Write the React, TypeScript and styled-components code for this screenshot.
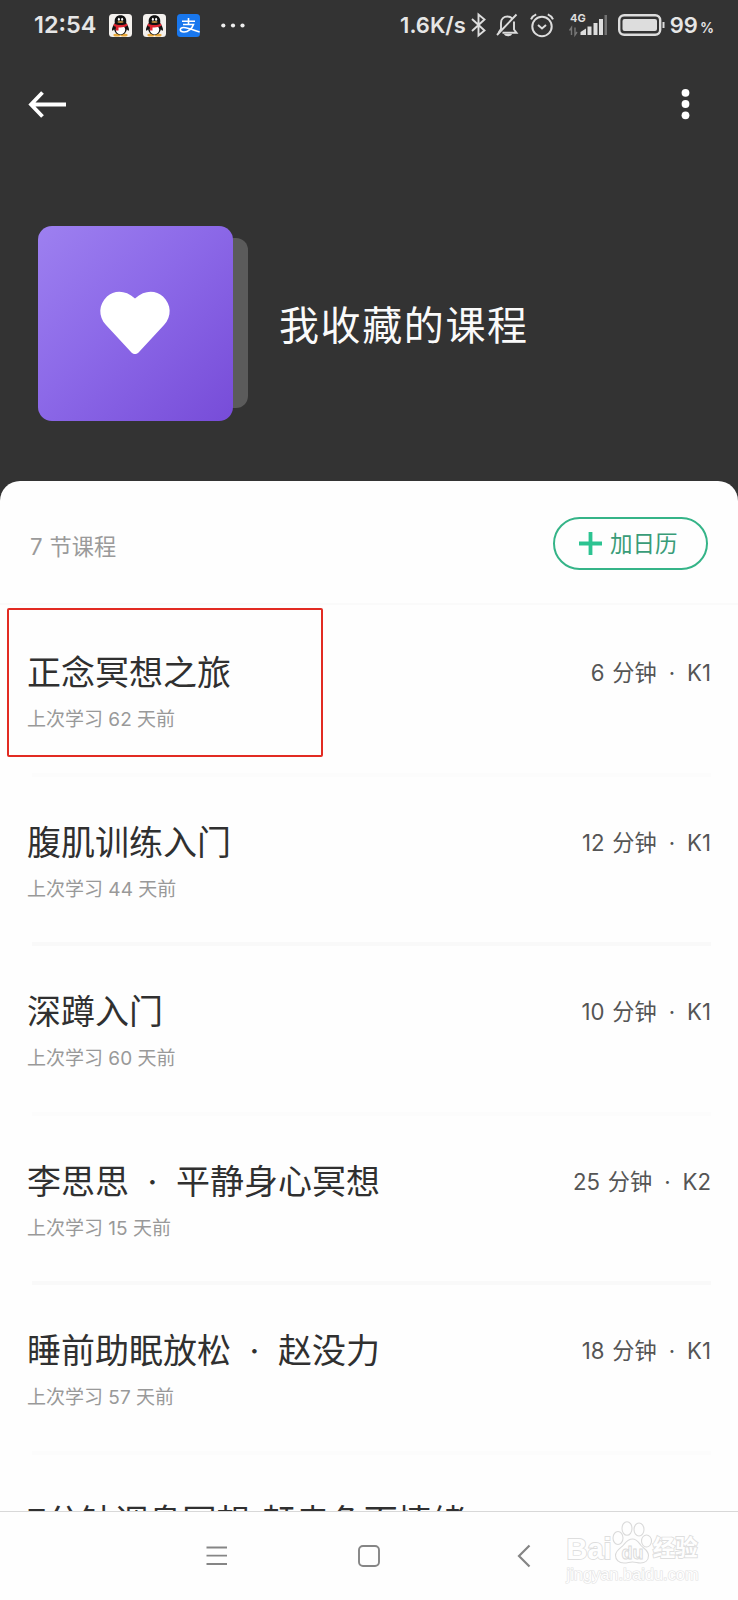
import React from 'react';
import styled, { createGlobalStyle } from 'styled-components';

const GlobalStyle = createGlobalStyle`
  * { box-sizing: border-box; }
  html, body { margin: 0; padding: 0; background: #333; }
  body { font-family: Inter, 'Noto Sans CJK SC', sans-serif; }
`;

const Screen = styled.div`
  width: 738px;
  height: 1600px;
  display: flex;
  flex-direction: column;
  overflow: hidden;
  background: #333333;
`;

const StatusBar = styled.header`
  height: 52px;
  flex: none;
  display: flex;
  align-items: center;
  justify-content: space-between;
  padding: 0 24px 2px 34px;
  color: #e6e6e6;
`;

const StatusGroup = styled.div`
  display: flex;
  align-items: center;
`;

const StatusText = styled.span<{ $size: number; $ml?: number; $drop?: number }>`
  margin-left: ${p => p.$ml ?? 0}px;
  margin-top: ${p => p.$drop ?? 0}px;
  font-size: ${p => p.$size}px;
  font-weight: 600;
  line-height: 28px;
  white-space: nowrap;
`;

const Glyph = styled.svg<{ $ml?: number }>`
  display: block;
  flex: none;
  overflow: visible;
  margin-left: ${p => p.$ml ?? 0}px;
`;

const Toolbar = styled.nav`
  height: 104px;
  flex: none;
  display: flex;
  align-items: center;
  justify-content: space-between;
  padding: 0 46px 0 28px;
`;

const IconButton = styled.button`
  border: 0;
  padding: 0;
  background: none;
  display: flex;
`;

const Hero = styled.section`
  height: 325px;
  flex: none;
  display: flex;
  align-items: flex-start;
  padding: 69.5px 0 0 37.5px;
`;

const CoverStack = styled.div`
  display: flex;
  align-items: center;
  width: 210.5px;
  height: 195.5px;
`;

const Cover = styled.div`
  width: 195.5px;
  height: 195.5px;
  flex: none;
  z-index: 1;
  border-radius: 14px;
  display: flex;
  align-items: center;
  justify-content: center;
  background: linear-gradient(135deg, #9d80f0 0%, #8c69e8 45%, #774cd8 100%);
`;

const CoverBack = styled.div`
  width: 35px;
  height: 170px;
  flex: none;
  margin-left: -20px;
  border-radius: 12px;
  background: #5b5b5b;
`;

const HeroTitle = styled.h1`
  margin: 76px 0 0 31px;
  font-size: 40px;
  font-weight: 400;
  line-height: 48px;
  letter-spacing: 1.6px;
  color: #fafafa;
`;

const Sheet = styled.main`
  height: 1030px;
  flex: none;
  overflow: hidden;
  background: #fefefe;
  border-radius: 20px 20px 0 0;
`;

const SheetHeader = styled.div`
  height: 124px;
  display: flex;
  align-items: flex-start;
  justify-content: space-between;
  padding: 36px 30px 0 30px;
  border-bottom: 2px solid #fafafa;
`;

const Count = styled.span`
  margin-top: 14px;
  font-size: 22.2px;
  line-height: 32px;
  word-spacing: 0.8px;
  color: #9a9a9a;
`;

const CalendarButton = styled.button`
  width: 155px;
  height: 53px;
  padding: 0 0 0 24px;
  display: flex;
  align-items: center;
  gap: 8px;
  border: 2px solid #35b488;
  border-radius: 27px;
  background: transparent;
  color: #399c78;
  font-family: inherit;
  font-size: 22.5px;
  line-height: 30px;
  white-space: nowrap;
`;

const Row = styled.article`
  position: relative;
  height: 169.6px;
  display: flex;
  justify-content: space-between;
  align-items: flex-start;
  padding: 44px 27px 0 27px;
`;

const Divider = styled.div<{ $faint: boolean }>`
  height: 4px;
  margin: -2px 27px -2px 32px;
  background: ${p => (p.$faint ? '#fcfcfc' : '#f9f9f9')};
`;

const RowTitle = styled.h2`
  margin: 0;
  font-size: 34px;
  font-weight: 400;
  line-height: 48px;
  word-spacing: 9px;
  white-space: nowrap;
  color: #303030;
`;

const LastTitle = styled(RowTitle)`
  margin-top: 1px;
  word-spacing: 2px;
`;

const RowNote = styled.p`
  margin: 9px 0 0;
  font-size: 19px;
  line-height: 28px;
  color: #999999;
`;

const Meta = styled.span`
  margin-top: 8px;
  font-size: 22.2px;
  line-height: 32px;
  word-spacing: 1.5px;
  white-space: nowrap;
  color: #555555;
`;

const Dot = styled.span`
  margin: 0 12px;
`;

const Highlight = styled.div`
  position: absolute;
  left: 7px;
  top: 3px;
  width: 316px;
  height: 149px;
  border: 2px solid #e22b22;
  border-radius: 2px;
`;

const SystemNav = styled.footer`
  height: 89px;
  flex: none;
  display: flex;
  align-items: flex-start;
  border-top: 1px solid #d8d8d8;
  background: #fefefe;
  padding: 33px 0 0 205px;
`;

const Watermark = styled.div`
  margin: -26px 0 0 36px;
  color: #fefefe;
  font-family: 'Liberation Sans', 'Noto Sans CJK SC', sans-serif;
  -webkit-text-stroke: 1.8px #dedede;
  paint-order: stroke fill;
`;

const Brand = styled.div`
  display: flex;
  align-items: flex-end;
  height: 45px;
  font-weight: 700;
  line-height: 30px;
`;

const BrandText = styled.span<{ $size: number }>`
  font-size: ${p => p.$size}px;
  white-space: nowrap;
`;

const Site = styled.div`
  font-size: 16.4px;
  line-height: 20px;
  -webkit-text-stroke: 1.2px #e2e2e2;
`;

const courses = [
  { title: '正念冥想之旅', days: 62, minutes: 6, level: 'K1', marked: true },
  { title: '腹肌训练入门', days: 44, minutes: 12, level: 'K1' },
  { title: '深蹲入门', days: 60, minutes: 10, level: 'K1' },
  { title: '李思思 · 平静身心冥想', days: 15, minutes: 25, level: 'K2' },
  { title: '睡前助眠放松 · 赵没力', days: 57, minutes: 18, level: 'K1' },
];

const Penguin = ({ ml }: { ml: number }) => (
  <Glyph $ml={ml} width="23" height="23" viewBox="0 0 23 23">
    <rect width="23" height="23" rx="3.5" fill="#f4f1ee" />
    <ellipse cx="8" cy="21" rx="3.6" ry="1.5" fill="#e9a83a" />
    <ellipse cx="15" cy="21" rx="3.6" ry="1.5" fill="#e9a83a" />
    <path d="M5.8 9C5 3.8 7.8 1.3 11.5 1.3S18 3.8 17.2 9c1.6 2.3 3 5.1 2.8 7.1-.2 1.3-1.4.4-2.1-.8-.7 3.4-3 5.7-6.4 5.7s-5.7-2.3-6.4-5.7C4.4 16.5 3.2 17.4 3 16.1 2.8 14.1 4.2 11.3 5.8 9z" fill="#111" />
    <ellipse cx="11.5" cy="15.8" rx="4.7" ry="4.6" fill="#fff" />
    <ellipse cx="9.9" cy="5.3" rx="1" ry="1.5" fill="#fff" />
    <ellipse cx="13.1" cy="5.3" rx="1" ry="1.5" fill="#fff" />
    <ellipse cx="11.5" cy="8.1" rx="3.2" ry="1" fill="#b98a3c" />
    <path d="M5 9.5c4 2.1 9 2.1 13 0l.5 2.3c-2.7 1.4-6 1.9-9 1.6v3.1H6.800v-3.700L4.500 12z" fill="#dd2530" />
  </Glyph>
);

const Pay = () => (
  <Glyph $ml={11.5} width="23" height="23" viewBox="0 0 23 23">
    <rect width="23" height="23" rx="3.5" fill="#1877ee" />
    <g fill="none" stroke="#fff" strokeWidth="1.6">
      <path d="M5 7.300h13M11.500 4v6.500M6 10.500h10.500c-1.200 3.500-5.200 7.500-9.500 7.500-5 0-4.700-4.500-.4-4.500 4.600 0 9.600 2.500 16 4.500" />
    </g>
  </Glyph>
);

const Heart = () => (
  <Glyph width="70" height="63" viewBox="0 0 70 63">
    <path
      d="M35 6.500C45-2.500 56-1.500 63 4.500c8.500 8 9 20 1 28.500L39 60c-2.500 2.800-5.500 2.800-8 0L6 33C-2 24.500-1.500 12.500 7 4.500 14-1.500 25-2.500 35 6.500z"
      fill="#fff"
    />
  </Glyph>
);

const PawMark = styled(Glyph)`
  -webkit-text-stroke: 0;
  paint-order: normal;
`;

const Paw = () => (
  <PawMark width="41" height="43" viewBox="0 0 41 43" fill="#fefefe" stroke="#dadada" strokeWidth="1.1">
    <ellipse cx="6" cy="17" rx="5" ry="6.5" />
    <ellipse cx="15" cy="7.5" rx="5" ry="6.8" />
    <ellipse cx="27" cy="8.5" rx="5" ry="6.5" />
    <ellipse cx="34.5" cy="20" rx="5" ry="6" />
    <path d="M20.500 18c4.500 0 6 3.500 8.500 6.500s7.500 5 7.500 10-3.500 7.500-8 7.500c-3 0-5-1-8-1s-5 1-8.500 1c-5 0-8.500-3-8.500-7.500 0-5.500 5.500-7.500 8-10.500s4.500-6 9-6z" />
    <text x="9.5" y="38" fontSize="18" fontFamily="Liberation Sans" fontWeight="700" strokeWidth="0.9">du</text>
  </PawMark>
);

export default function App() {
  return (
    <>
      <GlobalStyle />
      <Screen>
        <StatusBar>
          <StatusGroup>
            <StatusText $size={23.5}>12:54</StatusText>
            <Penguin ml={12} />
            <Penguin ml={11} />
            <Pay />
            <Glyph $ml={20.5} width="24" height="5" viewBox="0 0 24 5" fill="#eee">
              <circle cx="2.3" cy="2.5" r="2.1" />
              <circle cx="12" cy="2.5" r="2.1" />
              <circle cx="21.5" cy="2.5" r="2.1" />
            </Glyph>
          </StatusGroup>
          <StatusGroup>
            <StatusText $size={22}>1.6K/s</StatusText>
            <Glyph $ml={5} width="15" height="24" viewBox="0 0 15 24" fill="none" stroke="#ddd" strokeWidth="1.9">
              <path d="M1 6l12.500 11.500L7.500 22.500V1.500L13.500 6.500 1 18" />
            </Glyph>
            <Glyph $ml={10} width="23" height="24" viewBox="0 0 23 24" fill="none" stroke="#ddd" strokeWidth="1.9">
              <path d="M5 16V10c0-4 2.800-6.500 6.500-6.500 1.700 0 3.200.6 4.300 1.500M18 8.500v8l2.500 3.200H6.500M20.500 1.500L1 22M2.500 19.700L5 16" />
              <path d="M8 21h8c-1 3-7 3-8 0z" fill="#ddd" stroke="none" />
            </Glyph>
            <Glyph $ml={11} width="24" height="24" viewBox="0 0 24 24" fill="none" stroke="#ddd" strokeWidth="2">
              <circle cx="12" cy="13.5" r="9.7" />
              <path d="M1 6.300c1-2.200 2.800-3.900 5.200-4.900M23 6.300c-1-2.200-2.800-3.900-5.200-4.900M8 12l4 3.500 4-3.500" />
            </Glyph>
            <Glyph $ml={15} width="38" height="24" viewBox="0 0 38 24" fill="#ddd">
              <text x="1" y="9" fontSize="11" fontWeight="700" fontFamily="Inter">4G</text>
              <path d="M11.500 19l5.500-3.500V22h-5.500zM18.500 13.500h4V22h-4zM24.500 10h4v12h-4zM30 6h4v16h-4z" />
              <path d="M35.500 2H38v20h-2.500z" fill="#727272" />
              <path d="M2.500 22v-7.500l-2 3M6 14.500V22l2-3" fill="none" stroke="#777" strokeWidth="1.4" />
            </Glyph>
            <Glyph $ml={11} width="47" height="22" viewBox="0 0 47 22">
              <rect x="1.2" y="1.2" width="41" height="19.6" rx="5" fill="none" stroke="#ddd" strokeWidth="2.4" />
              <rect x="4.5" y="5" width="34.5" height="12" rx="2" fill="#ddd" />
              <path d="M45.500 8v6" stroke="#ddd" strokeWidth="2" />
            </Glyph>
            <StatusText $size={22} $ml={5}>99</StatusText>
            <StatusText $size={14} $ml={2} $drop={6}>%</StatusText>
          </StatusGroup>
        </StatusBar>

        <Toolbar>
          <IconButton aria-label="返回">
            <Glyph width="38" height="27" viewBox="0 0 38 27" fill="none" stroke="#fff" strokeWidth="3.8">
              <path d="M14.500 1.500L3 13.500l11.500 12M2.500 13.500H38" />
            </Glyph>
          </IconButton>
          <IconButton aria-label="更多">
            <Glyph width="14" height="32" viewBox="0 0 14 32" fill="#fff">
              <circle cx="7.5" cy="4.8" r="3.9" />
              <circle cx="7.5" cy="16" r="3.9" />
              <circle cx="7.5" cy="27.3" r="3.9" />
            </Glyph>
          </IconButton>
        </Toolbar>

        <Hero>
          <CoverStack>
            <Cover><Heart /></Cover>
            <CoverBack />
          </CoverStack>
          <HeroTitle>我收藏的课程</HeroTitle>
        </Hero>

        <Sheet>
          <SheetHeader>
            <Count>7 节课程</Count>
            <CalendarButton>
              <Glyph width="23" height="23" viewBox="0 0 23 23" stroke="#2cc391" strokeWidth="3.8">
                <path d="M0 11.500h23M11.500 0v23" />
              </Glyph>
              加日历
            </CalendarButton>
          </SheetHeader>
          {courses.map((c, i) => (
            <React.Fragment key={c.title}>
              <Row>
                {c.marked && <Highlight />}
                <div>
                  <RowTitle>{c.title}</RowTitle>
                  <RowNote>上次学习 {c.days} 天前</RowNote>
                </div>
                <Meta>{c.minutes} 分钟<Dot>·</Dot>{c.level}</Meta>
              </Row>
              <Divider $faint={i % 2 === 0} />
            </React.Fragment>
          ))}
          <Row>
            <LastTitle>7分钟调息冥想 赶走负面情绪</LastTitle>
          </Row>
        </Sheet>

        <SystemNav>
          <Glyph width="23" height="22" viewBox="0 0 23 22" stroke="#858585" strokeWidth="1.8">
            <path d="M1.500 2.500H22M1.500 10.700H22M1.500 19H22" />
          </Glyph>
          <Glyph $ml={130} width="22" height="22" viewBox="0 0 22 22" fill="none" stroke="#858585" strokeWidth="1.9">
            <rect x="1" y="1" width="20" height="20" rx="4" />
          </Glyph>
          <Glyph $ml={136.5} width="14" height="22" viewBox="0 0 14 22" fill="none" stroke="#858585" strokeWidth="2.2">
            <path d="M12.500 0.500L2 11l10.500 10.500" />
          </Glyph>
          <Watermark>
            <Brand>
              <BrandText $size={29}>Bai</BrandText>
              <Paw />
              <BrandText $size={22.5}>经验</BrandText>
            </Brand>
            <Site>jingyan.baidu.com</Site>
          </Watermark>
        </SystemNav>
      </Screen>
    </>
  );
}
